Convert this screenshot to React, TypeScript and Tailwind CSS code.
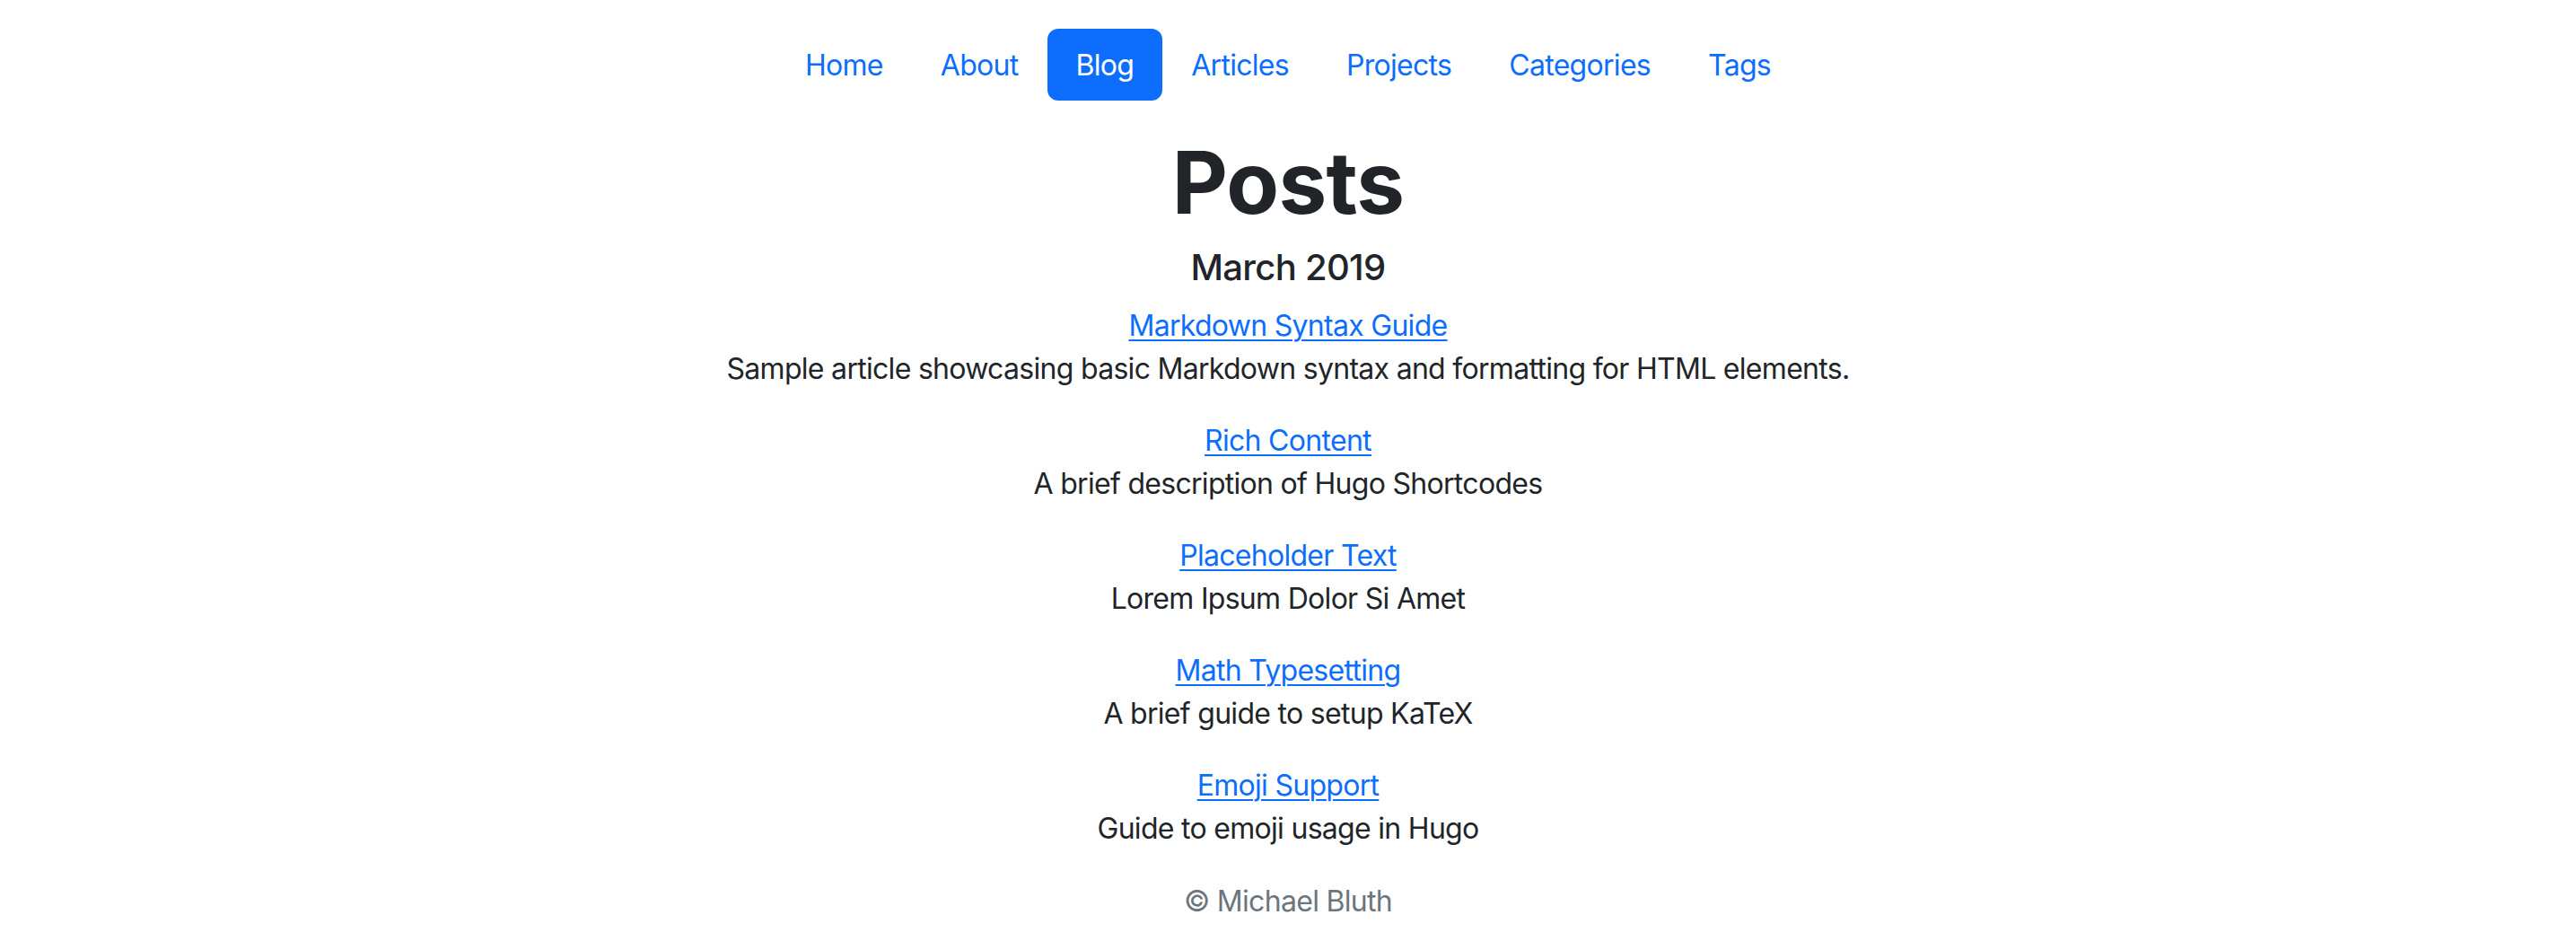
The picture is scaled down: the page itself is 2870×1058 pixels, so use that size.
const navItems = ['Home', 'About', 'Blog', 'Articles', 'Projects', 'Categories', 'Tags']

const posts = [
    {
        title: 'Markdown Syntax Guide',
        summary:
            'Sample article showcasing basic Markdown syntax and formatting for HTML elements.',
    },
    { title: 'Rich Content', summary: 'A brief description of Hugo Shortcodes' },
    { title: 'Placeholder Text', summary: 'Lorem Ipsum Dolor Si Amet' },
    { title: 'Math Typesetting', summary: 'A brief guide to setup KaTeX' },
    { title: 'Emoji Support', summary: 'Guide to emoji usage in Hugo' },
]

function App() {
    return (
        <div className="flex min-h-screen flex-col items-center bg-white font-['Inter',sans-serif] text-[32px] leading-[48px] tracking-[-0.022em] text-[#212529]">
            <nav className="mt-[32px] flex flex-row">
                {navItems.map((item) => (
                    <a
                        key={item}
                        href="#"
                        className={
                            item === 'Blog'
                                ? 'rounded-[12px] bg-[#0d6efd] px-[32px] pt-[17px] pb-[15px] text-white'
                                : 'px-[32px] pt-[17px] pb-[15px] text-[#0d6efd]'
                        }
                    >
                        {item}
                    </a>
                ))}
            </nav>
            <h1 className="mt-[34px] text-[96px] leading-[115px] font-bold">Posts</h1>
            <h2 className="mt-[13px] text-[40px] leading-[48px] font-medium">March 2019</h2>
            <ul className="mt-[17px] flex flex-col items-center gap-[32px]">
                {posts.map((post) => (
                    <li key={post.title} className="flex flex-col items-center">
                        <a
                            href="#"
                            className="text-[#0d6efd] underline decoration-2 underline-offset-[4px]"
                        >
                            {post.title}
                        </a>
                        <span>{post.summary}</span>
                    </li>
                ))}
            </ul>
            <footer className="mt-[33px] text-[#6c757d]">© Michael Bluth</footer>
        </div>
    )
}

export default App
